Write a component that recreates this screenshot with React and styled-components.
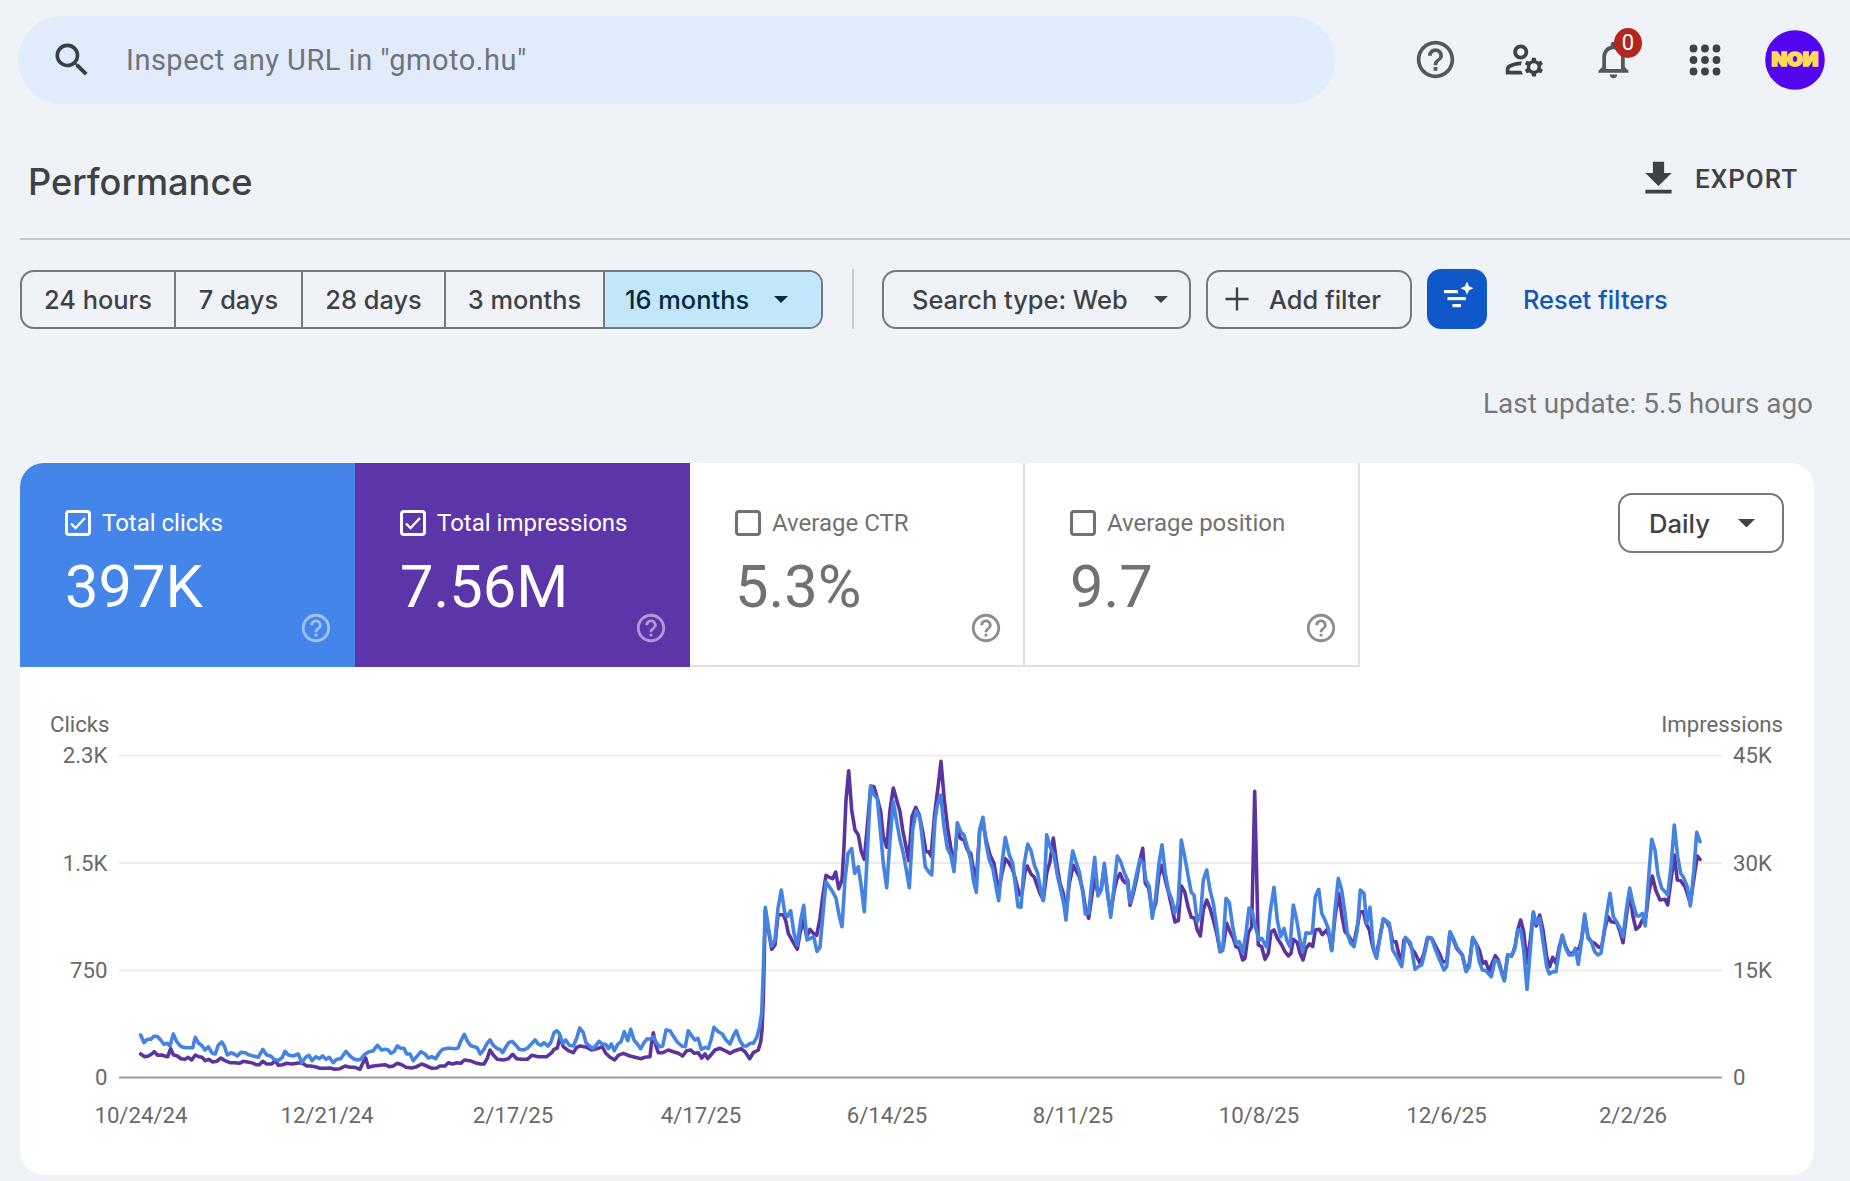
import React from "react";
import styled, { createGlobalStyle } from "styled-components";
import {
  MdSearch,
  MdHelpOutline,
  MdOutlineManageAccounts,
  MdNotificationsNone,
  MdFileDownload
} from "react-icons/md";

const ranges = [
  { label: "24 hours", width: 152 },
  { label: "7 days", width: 127 },
  { label: "28 days", width: 143 },
  { label: "3 months", width: 159 }
];

const metrics = [
  { label: "Total clicks", value: "397K", color: "#4485ea" },
  { label: "Total impressions", value: "7.56M", color: "#5c35a8" },
  { label: "Average CTR", value: "5.3%" },
  { label: "Average position", value: "9.7" }
];

const dates = [
  [141, "10/24/24"],
  [327, "12/21/24"],
  [513, "2/17/25"],
  [701, "4/17/25"],
  [887, "6/14/25"],
  [1073, "8/11/25"],
  [1259, "10/8/25"],
  [1446.5, "12/6/25"],
  [1633, "2/2/26"]
];

const gridRows = [
  [755.5, "2.3K", "45K"],
  [863, "1.5K", "30K"],
  [970.5, "750", "15K"],
  [1077.5, "0", "0"]
];

// Each chunk is [originX, originY, points], points are in thirds of a unit
const clicks = [
  [120, 980, "62,165 72,188 82,178 92,178 103,168 113,170 122,180 132,193 142,190 150,198 160,162 170,185 180,197 190,202 200,203 210,203 218,203 226,172 236,190 246,197 255,210 265,200 275,218 286,222 295,195 305,186 313,198 322,225 333,218 342,222 352,228 363,217 375,218 388,225 400,228 415,232 428,208 440,225 452,228 462,238 475,242 487,232 495,214 505,225 520,228 535,222 545,248 557,232 567,226 576,242 588,230 598,236 608,228 618,238 628,232 640,248 650,238 662,236 678,214 690,228 700,236 712,240 722,238 732,225 745,216 760,212 772,196 785,210 795,208 805,210 812,220 822,215 832,198 842,205 852,205 860,222 870,222 880,242 890,230 903,215 915,222 925,234 935,230 947,236 958,218 968,208 985,205"],
  [440, 980, "32,205 45,206 55,203 63,182 73,163 83,185 92,197 103,200 112,204 121,222 132,208 140,192 150,180 160,196 172,206 180,208 188,218 198,200 206,188 216,184 228,196 238,208 250,210 262,205 272,194 285,180 295,192 303,196 312,188 324,198 332,188 342,158 350,152 358,160 368,190 377,180 388,196 400,198 410,175 419,144 430,158 438,188 448,198 458,206 468,196 477,184 487,192 497,193 505,206 514,192 523,212 533,193 543,185 553,155 563,182 572,148 582,180 592,192 602,206 612,188 622,176 632,178 640,170 650,190 660,200 668,198 678,150 690,152 700,168 712,186 725,198 736,200 745,152 755,168 765,180 774,175 784,208 795,202 805,206 813,180 822,142 835,155 847,162 858,180 870,192 880,168 889,152 899,180 910,198 920,198 930,190 940,190 950,172"],
  [740, 740, "58,865 65,820 70,690 76,502 86,570 95,618 105,600 114,505 124,450 134,518 142,530 152,512 162,580 172,615 182,540 191,496 201,600 211,595 221,590 231,634 240,622 250,510 258,425 268,440 278,455 288,475 297,525 306,560 315,420 324,340 335,326 344,400 355,380 364,440 373,515 382,340 392,138 402,165 412,175 420,260 430,370 440,443 450,300 460,185 470,245 480,300 490,340 498,385 508,443 518,270 529,212 540,235 548,310 556,380 566,395 575,405 585,240 592,195 602,165 612,260 622,325 632,345 642,395 652,248 662,275 672,285 682,320 692,360 700,420 709,457 719,270 729,232 738,310 748,360 758,385 768,440 776,482 786,370 796,292 808,345 818,370 828,450 834,500"],
  [1020, 780, "3,382 13,250 23,192 33,212 43,255 53,280 62,330 70,362 76,260 80,164 90,200 102,225 112,285 122,330 132,375 138,420 148,290 158,212 168,245 178,275 188,335 196,402 206,400 215,310 224,232 234,348 244,330 253,250 263,340 272,412 282,320 292,228 302,245 312,275 320,295 330,368 340,330 350,280 360,238 370,250 378,300 388,320 397,415 407,350 417,250 426,194 436,280 446,335 456,360 464,400 474,370 480,270 484,180 494,230 504,285 514,338 522,345 532,425 542,400 550,300 560,270 570,330 580,370 590,440 600,516 608,512 618,355 628,368 638,440 648,490 658,485"],
  [1220, 770, "68,548 78,490 87,414 97,425 107,475 117,510 125,505 140,532 150,430 162,352 172,450 182,500 192,475 200,510 210,530 220,405 230,450 240,510 248,545 258,488 268,490 277,488 286,380 296,358 305,430 315,450 325,475 335,542 345,420 355,325 365,360 375,430 382,490 392,520 402,530 412,480 421,360 432,370 440,460 450,412 460,530 470,565 480,500 490,446 508,460 518,540 530,560 545,590 556,502 572,520 585,598 595,590 605,585 615,545 624,502 634,504 645,535 655,560 672,600 680,590"],
  [1450, 800, "0,395 10,415 20,440 37,465 48,515 58,500 68,412 78,430 88,485 97,510 108,512 124,530 135,480 145,485 155,520 163,543 173,465 185,468 195,445 203,390 212,390 221,450 231,568 241,450 250,335 259,370 269,355 280,430 290,500 298,522 308,515 318,515 328,450 337,405 347,445 357,465 368,465 376,445 385,493 395,420 404,342 414,415 424,425 434,455 444,465 453,460 463,390 472,330 480,280 490,350 500,365 510,385 519,410 529,330 539,264 549,310 560,348 568,348 577,340 586,378 596,230 605,118 615,150 624,225 635,265 645,275 653,285 663,200 673,75 683,170 692,220 702,235 712,260 721,318 731,215 740,97 750,125"]
];

const impressions = [
  [120, 980, "62,222 74,230 85,228 95,222 103,215 113,226 125,225 135,228 143,230 152,206 160,224 172,228 183,236 195,238 205,232 215,240 226,225 236,230 246,232 256,242 266,238 278,246 290,244 303,234 315,242 330,248 345,248 358,250 370,244 382,246 395,248 408,254 418,254 428,244 440,252 455,252 466,242 475,256 488,254 500,250 515,252 530,250 545,248 560,258 572,258 585,260 600,265 615,265 630,264 645,268 660,266 675,258 690,262 705,262 720,268 728,250 737,234 745,262 760,258 780,256 795,254 808,260 820,258 832,250 845,254 858,262 875,264 890,260 905,252 920,258 935,265 950,264"],
  [440, 980, "0,258 15,258 25,248 38,252 50,248 62,250 73,240 90,242 105,248 120,252 132,252 142,235 150,210 160,225 172,238 190,240 205,236 218,223 230,236 245,238 262,238 275,226 295,230 320,230 335,218 342,208 352,204 360,172 370,200 385,212 400,218 410,202 420,198 440,202 455,210 475,205 487,200 497,220 510,232 524,240 535,226 550,220 570,228 585,232 602,236 615,232 630,230 634,196 640,158 647,195 655,218 668,218 685,210 700,215 715,220 728,228 740,212 752,210 763,220 775,218 785,234 795,222 803,236 815,222 825,210 840,205 855,212 870,220 885,212 903,206 915,215 929,236 940,218 955,210"],
  [740, 740, "62,905 66,870 70,780 76,510 86,575 95,628 105,615 114,524 130,524 138,545 145,580 158,604 172,628 180,580 190,540 200,590 210,568 220,580 230,586 240,535 248,470 258,406 268,412 278,416 287,396 296,446 306,420 312,320 318,180 326,92 335,210 345,270 355,285 364,335 373,358 382,260 392,138 402,140 412,175 422,215 430,290 440,322 450,210 460,144 470,180 480,215 488,270 498,320 506,362 516,230 527,202 538,225 548,275 558,335 566,335 573,348 584,220 595,135 603,64 613,180 623,265 635,340 643,370 652,270 662,296 672,300 682,330 692,340 700,385 709,420 719,270 728,240 738,300 750,345 762,370 776,455 786,400 796,356 806,368 816,385 826,415 838,465 846,460 855,395"],
  [1020, 780, "22,258 33,282 43,292 52,318 62,345 70,360 80,280 90,245 100,174 110,250 120,310 130,340 138,405 148,310 160,256 170,275 178,290 188,330 196,380 206,415 215,350 224,295 234,340 244,325 253,260 263,345 272,400 282,335 290,300 300,280 308,300 315,308 323,300 330,376 340,340 350,295 360,240 368,205 376,310 386,325 397,400 407,370 416,290 426,256 436,300 446,340 455,380 465,426 475,422 484,318 494,335 504,380 514,412 524,415 532,450 541,468 550,390 560,360 570,385 580,420 590,460 600,512 610,500 620,430 630,455 640,475 648,500 658,505"],
  [1220, 770, "68,570 75,565 85,490 95,470 104,64 115,525 125,530 135,568 145,550 153,485 162,480 172,505 185,525 195,545 205,558 213,550 220,508 232,518 240,550 249,570 258,535 268,522 278,530 286,480 298,478 307,494 320,480 328,500 335,540 345,440 356,370 366,440 375,485 388,500 400,525 412,470 420,425 430,425 438,460 448,480 458,530 468,560 478,510 490,448 500,455 510,475 518,515 528,515 536,550 545,575 552,510 565,512 575,535 585,550 600,580 612,550 622,505 635,505 648,530 658,550 668,575 680,575"],
  [1450, 800, "0,396 20,445 37,465 48,512 58,490 68,415 78,430 88,450 98,490 107,485 118,515 128,485 136,467 145,480 155,515 163,540 173,465 185,468 195,440 203,390 212,360 221,395 231,490 241,420 250,340 259,378 269,345 279,390 290,470 299,500 308,472 318,490 328,440 337,408 347,440 357,460 368,460 376,450 388,445 395,415 404,350 414,410 424,425 434,430 446,442 455,440 465,385 474,350 484,365 500,368 510,395 519,428 529,350 539,275 549,350 558,388 568,380 577,360 588,350 596,280 607,228 617,270 630,300 645,298 653,315 663,240 673,165 682,240 692,242 705,260 721,310 731,240 742,168 750,178"]
];

const toPoints = chunks =>
  chunks
    .map(([ox, oy, pts]) =>
      pts
        .split(" ")
        .map(p => {
          const [x, y] = p.split(",");
          return `${(ox + x / 3).toFixed(1)},${(oy + y / 3).toFixed(1)}`;
        })
        .join(" ")
    )
    .join(" ");

const Chart = () => (
  <ChartSvg viewBox="20 667 1794 508">
    <text x="50" y="731.5">Clicks</text>
    <text x="1783" y="731.5" textAnchor="end">Impressions</text>
    {gridRows.map(([y, left, right]) => (
      <g key={y}>
        <line
          x1="119"
          x2="1722"
          y1={y}
          y2={y}
          stroke={left === "0" ? "#9a9a9a" : "#ececec"}
          strokeWidth="2"
        />
        <text x="107.5" y={y + 7.5} textAnchor="end">{left}</text>
        <text x="1733" y={y + 7.5}>{right}</text>
      </g>
    ))}
    <Line points={toPoints(impressions)} stroke="#5b34a0" />
    <Line points={toPoints(clicks)} stroke="#4483e2" />
    {dates.map(([x, label]) => (
      <text key={label} x={x} y="1123" textAnchor="middle">{label}</text>
    ))}
  </ChartSvg>
);

const AppsIcon = () => (
  <svg width="32" height="32" viewBox="0 0 32 32" fill="#3f4245">
    {[4.5, 16, 27.5].map(y =>
      [4.5, 16, 27.5].map(x => <circle key={x + "-" + y} cx={x} cy={y} r="3.9" />)
    )}
  </svg>
);

const SmartFilterIcon = () => (
  <svg width="60" height="60" viewBox="0 0 60 60" fill="#fff">
    <rect x="17" y="21" width="14" height="3.2" />
    <rect x="20.5" y="28" width="18.5" height="3.2" />
    <rect x="25.5" y="35" width="8.5" height="3.2" />
    <path d="M40 12.5 L42 17.2 L46.5 19.2 L42 21.2 L40 25.8 L38 21.2 L33.5 19.2 L38 17.2 Z" />
  </svg>
);

const Caret = ({ size = 14 }) => (
  <svg width={size} height={size / 2} viewBox="0 0 14 7" fill="currentColor">
    <path d="M0 0 H14 L7 7 Z" />
  </svg>
);

const App = () => (
  <Page>
    <GlobalStyle />
    <TopBar>
      <SearchBox>
        <MdSearch size={44} color="#3a3f44" />
        <span>Inspect any URL in "gmoto.hu"</span>
      </SearchBox>
      <Actions>
        <MdHelpOutline size={45} color="#55585b" />
        <MdOutlineManageAccounts size={45} color="#3f4245" />
        <Bell>
          <MdNotificationsNone size={45} color="#55585b" />
          <Badge>0</Badge>
        </Bell>
        <AppsIcon />
        <Avatar viewBox="0 0 60 60">
          <circle cx="30" cy="30" r="29.8" fill="#5206f0" />
          <text x="6.5" y="36.2" textLength="47" lengthAdjust="spacingAndGlyphs">NOИ</text>
        </Avatar>
      </Actions>
    </TopBar>
    <TitleRow>
      <Title>Performance</Title>
      <Export>
        <MdFileDownload size={45} />
        EXPORT
      </Export>
    </TitleRow>
    <Filters>
      <RangeGroup>
        {ranges.map(r => (
          <Range key={r.label} $width={r.width}>{r.label}</Range>
        ))}
        <Range $width={218} $active>
          16 months <Caret />
        </Range>
      </RangeGroup>
      <Separator />
      <Chip $width={309} $pad={28} $gap={26}>
        Search type: Web <Caret />
      </Chip>
      <Chip $width={206} $pad={17} $gap={20}>
        <svg width="24" height="24" viewBox="0 0 24 24" stroke="currentColor" strokeWidth="2.4">
          <path d="M12 0.5 V23.5 M0.5 12 H23.5" />
        </svg>
        Add filter
      </Chip>
      <SmartButton>
        <SmartFilterIcon />
      </SmartButton>
      <Reset>Reset filters</Reset>
    </Filters>
    <Updated>Last update: 5.5 hours ago</Updated>
    <Panel>
      <Metrics>
        {metrics.map(m => (
          <Metric key={m.label} $color={m.color}>
            <MetricLabel>
              <Checkbox>
                {m.color && (
                  <svg width="18" height="18" viewBox="0 0 18 18" fill="none" stroke="#fff" strokeWidth="2.4">
                    <path d="M2 9.5 L6.5 14 L16 4" />
                  </svg>
                )}
              </Checkbox>
              {m.label}
            </MetricLabel>
            <MetricValue>{m.value}</MetricValue>
            <MetricHelp $dim={m.color}>
              <MdHelpOutline size={34} />
            </MetricHelp>
          </Metric>
        ))}
        <Daily>
          Daily <Caret size={17} />
        </Daily>
      </Metrics>
      <Chart />
    </Panel>
  </Page>
);

export default App;

//------------------- Styles ------------------------//

const GlobalStyle = createGlobalStyle`
  *, *:before, *:after {
    box-sizing: border-box;
  }
  body {
    margin: 0;
    background: #eff3f8;
    font-family: Roboto, "Liberation Sans", sans-serif;
    color: #3f4245;
  }
  svg {
    display: block;
    flex: none;
  }
`;

const Page = styled.div`
  width: 1850px;
  height: 1181px;
  overflow: hidden;
  padding: 15px 0 0 20px;
`;

const TopBar = styled.div`
  display: flex;
  align-items: center;
  justify-content: space-between;
  height: 89px;
  margin-left: -2px;
  padding-right: 25px;
`;

const SearchBox = styled.div`
  display: flex;
  align-items: center;
  gap: 32px;
  width: 1317px;
  height: 88px;
  padding-left: 32px;
  border-radius: 44px;
  background: #e2ebfb;
  color: #6f747b;
  font-size: 29px;
  letter-spacing: 0.5px;
  white-space: nowrap;
`;

const Actions = styled.div`
  display: flex;
  align-items: center;
  gap: 44px;
`;

const Bell = styled.div`
  position: relative;
  margin-right: 9px;
`;

const Badge = styled.span`
  position: absolute;
  top: -9px;
  left: 23px;
  width: 28px;
  height: 30px;
  border-radius: 50%;
  background: #b3261e;
  color: #fff;
  font-size: 22px;
  line-height: 30px;
  text-align: center;
`;

const Avatar = styled.svg`
  width: 60px;
  height: 60px;

  text {
    font-family: Inter, sans-serif;
    font-size: 19px;
    font-weight: 900;
    fill: #ffd95a;
    stroke: #ffd95a;
    stroke-width: 1.6;
  }
`;

const TitleRow = styled.div`
  display: flex;
  align-items: center;
  justify-content: space-between;
  height: 136px;
  padding: 15px 52px 0 8px;
  border-bottom: 2px solid #c6c9ce;
`;

const Title = styled.h1`
  margin: 7px 0 0;
  font-family: Inter, sans-serif;
  font-size: 36.2px;
  font-weight: 500;
`;

const Export = styled.div`
  display: flex;
  align-items: center;
  gap: 14px;
  font-size: 26px;
  font-weight: 500;
  letter-spacing: 1px;
`;

const Filters = styled.div`
  display: flex;
  align-items: center;
  height: 60px;
  margin-top: 29px;
  font-family: Inter, sans-serif;
  font-size: 25.4px;
  font-weight: 500;
`;

const RangeGroup = styled.div`
  display: flex;
  width: 803px;
  height: 59px;
  border: 2px solid #75797d;
  border-radius: 14px;
  overflow: hidden;
`;

const Range = styled.div`
  display: flex;
  align-items: center;
  justify-content: ${props => (props.$active ? "flex-start" : "center")};
  gap: 25px;
  flex: 0 0 ${props => props.$width}px;
  padding-left: ${props => (props.$active ? "20px" : "0")};
  white-space: nowrap;
  background: ${props => (props.$active ? "#c2e7fb" : "transparent")};
  color: ${props => (props.$active ? "#062a40" : "inherit")};

  & + & {
    border-left: 2px solid #75797d;
  }
`;

const Separator = styled.div`
  width: 2px;
  height: 60px;
  margin: 0 28px 0 29px;
  background: #c9ccd1;
`;

const Chip = styled.div`
  display: flex;
  align-items: center;
  gap: ${props => props.$gap}px;
  width: ${props => props.$width}px;
  height: 59px;
  margin-right: 15px;
  padding-left: ${props => props.$pad}px;
  border: 2px solid #75797d;
  border-radius: 14px;
  white-space: nowrap;
`;

const SmartButton = styled.div`
  width: 60px;
  height: 60px;
  border-radius: 14px;
  background: #1058c9;
`;

const Reset = styled.span`
  margin-left: 36px;
  color: #1556b8;
`;

const Updated = styled.div`
  margin: 58px 37px 0 0;
  text-align: right;
  font-size: 27.9px;
  line-height: 33px;
  color: #74777b;
`;

const Panel = styled.div`
  width: 1794px;
  height: 712px;
  margin-top: 43px;
  border-radius: 24px;
  background: #fff;
  overflow: hidden;
`;

const Metrics = styled.div`
  display: flex;
  height: 204px;
`;

const Metric = styled.div`
  position: relative;
  flex: 0 0 335px;
  padding: 46px 0 0 45px;
  background: ${props => props.$color || "#fff"};
  color: ${props => (props.$color ? "#fff" : "#717171")};
  border: solid #e0e0e0;
  border-width: ${props => (props.$color ? "0" : "0 2px 2px 0")};
`;

const MetricLabel = styled.div`
  display: flex;
  align-items: center;
  gap: 11px;
  height: 28px;
  font-size: 24px;
  white-space: nowrap;
`;

const Checkbox = styled.span`
  display: flex;
  align-items: center;
  justify-content: center;
  width: 26px;
  height: 26px;
  border: 3px solid currentColor;
  border-radius: 4px;
`;

const MetricValue = styled.div`
  margin-top: 15px;
  font-size: 59.6px;
  line-height: 70px;
`;

const MetricHelp = styled.div`
  position: absolute;
  right: ${props => (props.$dim ? "22px" : "20px")};
  bottom: ${props => (props.$dim ? "22px" : "20px")};
  opacity: ${props => (props.$dim ? 0.5 : 0.8)};
`;

const Daily = styled.div`
  display: flex;
  align-items: center;
  justify-content: center;
  gap: 28px;
  width: 166px;
  height: 60px;
  margin: 30px 30px 0 auto;
  padding-left: 2px;
  border: 2px solid #75797d;
  border-radius: 14px;
  font-family: Inter, sans-serif;
  font-size: 25.6px;
  font-weight: 500;
`;

const ChartSvg = styled.svg`
  width: 1794px;
  height: 508px;
  font-size: 22.2px;

  text {
    fill: #696969;
  }
`;

const Line = styled.polyline`
  fill: none;
  stroke-width: 3.6;
  stroke-linejoin: round;
  stroke-linecap: round;
`;
